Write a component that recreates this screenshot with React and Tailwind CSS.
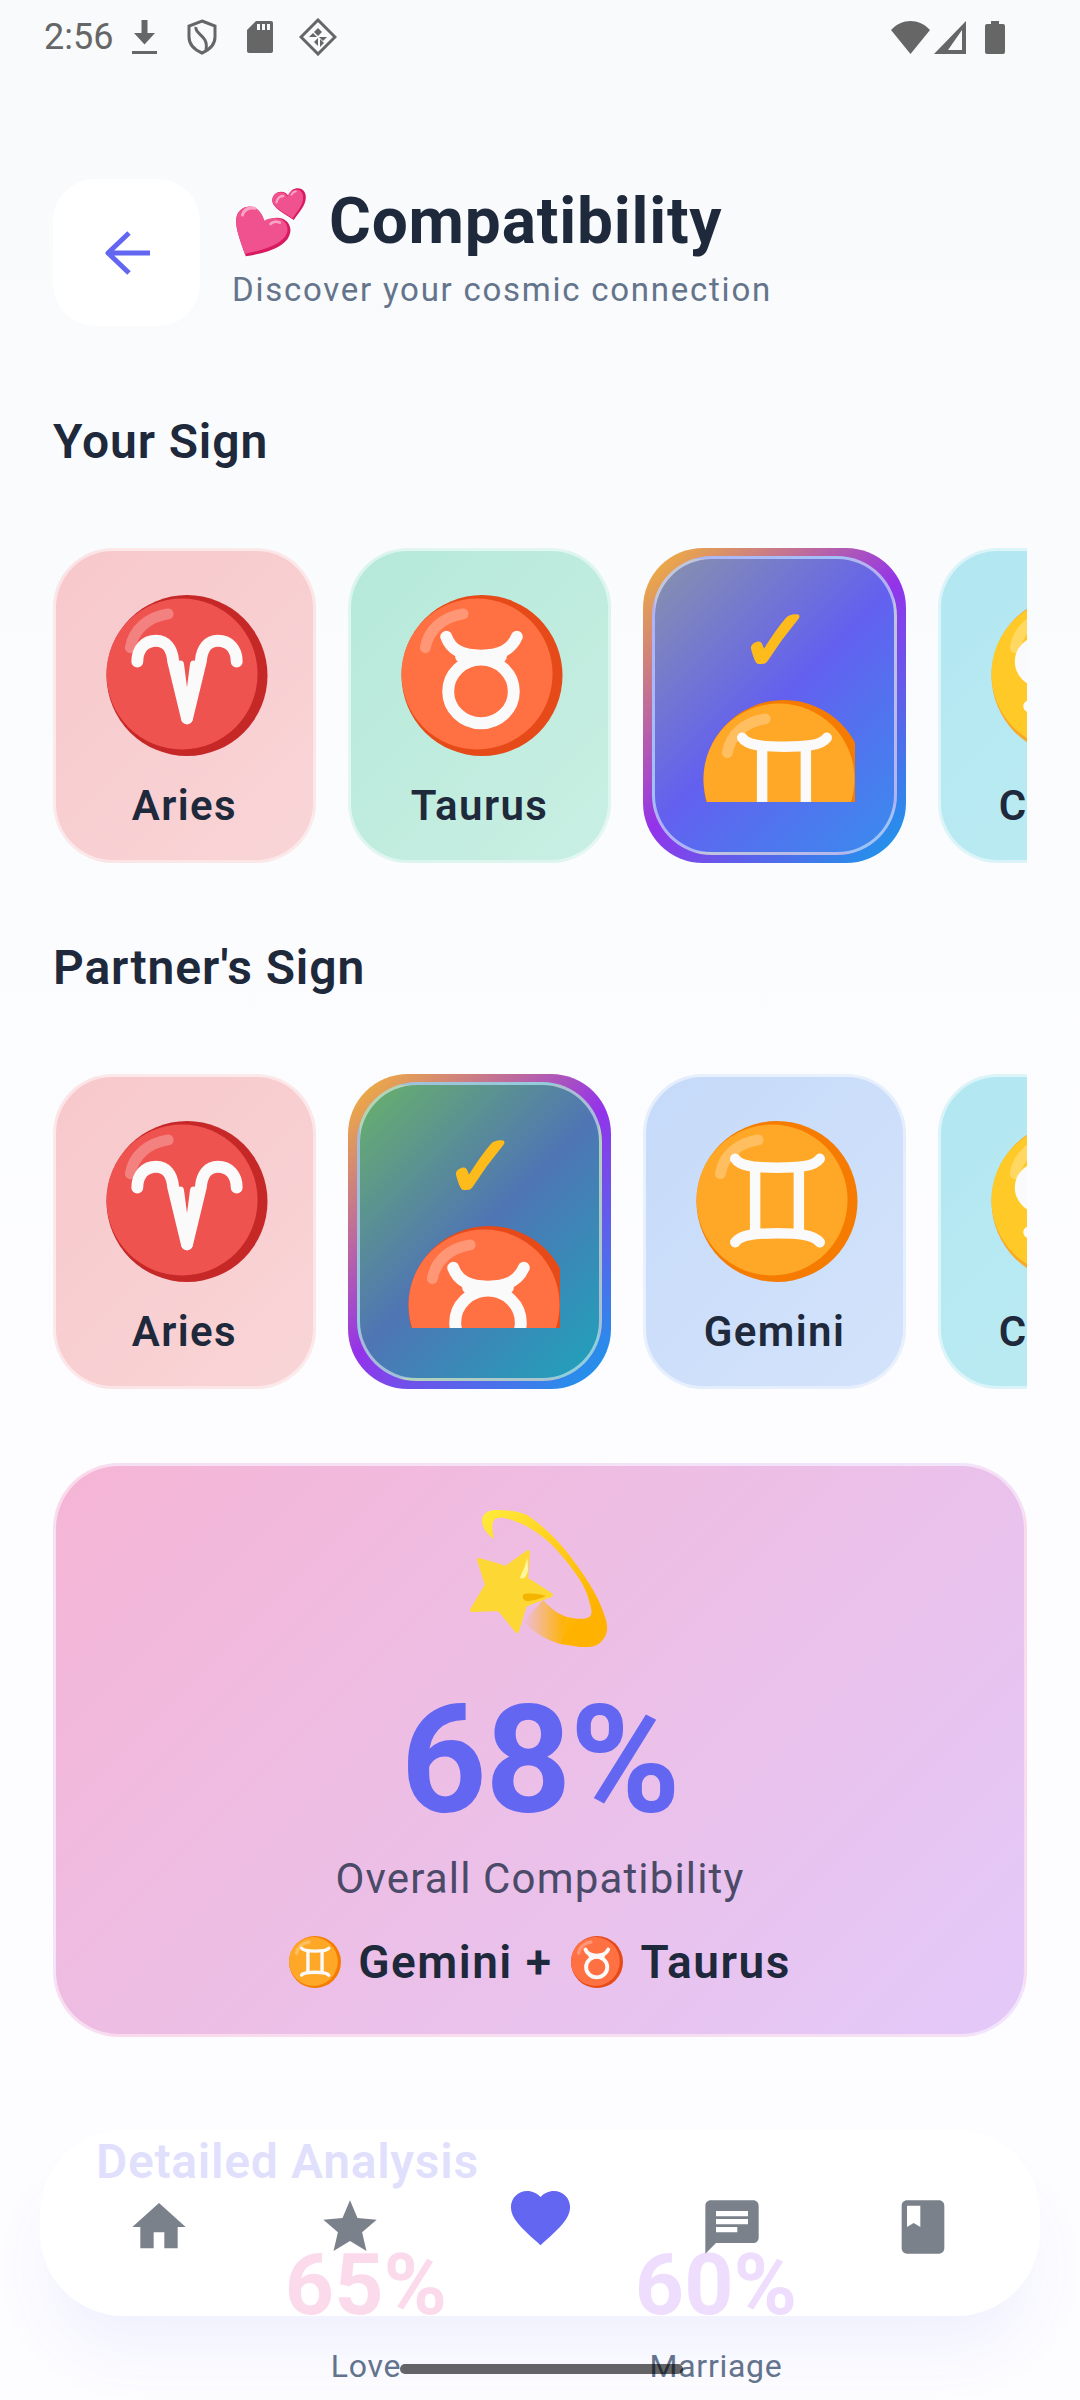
import React from "react";

const INK = "text-[#1e293b]";

function ZodiacDisc({ dark, light, children, className = "" }) {
  return (
    <svg viewBox="0 0 162 162" className={className}>
      <circle cx="81" cy="81" r="81" fill={dark} />
      <circle cx="76" cy="79.5" r="76" fill={light} />
      {children}
      <path d="M24 53C27 35 42 22 62 19" fill="none" stroke="#fff" strokeOpacity="0.27" strokeWidth="11" strokeLinecap="round" />
    </svg>
  );
}

const glyph = { fill: "none", stroke: "#fafafa", strokeWidth: 12, strokeLinecap: "round", strokeLinejoin: "round" };

function Aries({ className }) {
  return (
    <ZodiacDisc dark="#c62828" light="#ef5350" className={className}>
      <g {...glyph}>
        <path d="M31 67C31 54 39 46 50 46C60 46 66 54 67 66L81 124" />
        <path d="M131 67C131 54 123 46 112 46C102 46 96 54 95 66L81 124" />
        <path d="M74 70L81 124L88 70" strokeWidth="8" />
      </g>
    </ZodiacDisc>
  );
}
function Taurus({ className }) {
  return (
    <ZodiacDisc dark="#e64a19" light="#ff7043" className={className}>
      <g {...glyph}>
        <ellipse cx="80" cy="97" rx="33" ry="32" />
        <path d="M45 42C50 56 62 61 80 61C98 61 110 56 116 42" />
        <path d="M60 62L66 68M100 62L94 68" />
      </g>
    </ZodiacDisc>
  );
}
function Gemini({ className }) {
  return (
    <ZodiacDisc dark="#f57c00" light="#ffa726" className={className}>
      <g {...glyph} strokeWidth="10.5">
        <path d="M39 38C44 46 60 47 81 47C102 47 118 46 124 38" />
        <path d="M39 122C44 114 60 113 81 113C102 113 118 114 124 122" />
        <path d="M59 47V113M103 47V113" />
      </g>
    </ZodiacDisc>
  );
}
function Cancer({ className }) {
  return (
    <ZodiacDisc dark="#f9a825" light="#ffca28" className={className}>
      <g {...glyph}>
        <circle cx="49" cy="67" r="19" strokeWidth="13" />
        <circle cx="113" cy="95" r="19" strokeWidth="13" />
        <path d="M60 44C80 38 104 40 124 50M38 112C60 126 100 126 122 113" />
      </g>
    </ZodiacDisc>
  );
}

function SignCard({ name, Icon, from, to }) {
  return (
    <div
      className="flex h-[315px] w-[263px] shrink-0 flex-col items-center rounded-[60px] border-[3px] border-white/50 pt-[44px]"
      style={{ backgroundImage: `linear-gradient(135deg, ${from}, ${to})` }}
    >
      <div className="ml-[4px] h-[161px] w-[162px]">
        <Icon className="h-[161px] w-[162px]" />
      </div>
      <div className={`mt-[26px] whitespace-nowrap text-[42px] leading-[48px] font-semibold tracking-[1.4px] ${INK}`}>{name}</div>
    </div>
  );
}

function SelectedCard({ Icon, from, mid, to }) {
  return (
    <div className="h-[315px] w-[263px] shrink-0 rounded-[60px] bg-[linear-gradient(135deg,#f7b733_0%,#9333ea_50%,#169ceb_100%)] px-[9px] py-[8px]">
      <div
        className="flex h-full w-full flex-col items-center overflow-hidden rounded-[60px] border-[3px] border-white/50"
        style={{ backgroundImage: `linear-gradient(135deg, ${from} 0%, ${mid} 50%, ${to} 100%)` }}
      >
        <div className="ml-[3px] mt-[46px] h-[72px] text-[88px] leading-[72px] font-bold text-[#fdbb1c] [-webkit-text-stroke:3px_#fdbb1c] [font-family:'DejaVu_Sans',sans-serif]">✓</div>
        <div className="ml-[9px] mt-[23px] h-[102px] w-[152px] overflow-hidden">
          <Icon className="h-[161px] w-[162px] max-w-none" />
        </div>
      </div>
    </div>
  );
}

function SectionTitle({ children, className = "" }) {
  return <h2 className={`text-[48px] leading-[56px] font-semibold tracking-[0.9px] ${INK} ${className}`}>{children}</h2>;
}

function TwoHearts() {
  return (
    <svg viewBox="40 40 230 225" className="ml-[1px] h-[75px] w-[77px] shrink-0">
      <path d="M78 257C60 205 45 170 50 140C55 105 115 85 135 155C165 130 210 140 212 178C210 225 150 245 78 257Z" fill="#d81b60" />
      <path d="M75 250C60 205 45 170 50 140C55 105 115 85 133 150C160 135 203 140 203 178C200 215 145 235 75 250Z" fill="#f0528f" />
      <path d="M68 133C72 118 88 108 105 113" fill="none" stroke="#f8a5c6" strokeWidth="9" strokeLinecap="round" />
      <path d="M152 160C160 152 172 152 180 156" fill="none" stroke="#f8a5c6" strokeWidth="8" strokeLinecap="round" />
      <path d="M222 148C195 128 160 115 157 90C158 60 195 55 205 75C215 45 258 45 258 80C258 105 238 125 222 148Z" fill="#d81b60" />
      <path d="M218 143C195 125 160 112 157 90C158 60 195 58 203 78C215 50 250 50 250 80C250 105 232 122 218 143Z" fill="#f0528f" />
      <path d="M170 95C172 84 180 76 190 76" fill="none" stroke="#f8a5c6" strokeWidth="7" strokeLinecap="round" />
      <path d="M215 72C218 66 222 63 228 62" fill="none" stroke="#f8a5c6" strokeWidth="6" strokeLinecap="round" />
    </svg>
  );
}

function ShootingStar() {
  return (
    <svg viewBox="0 0 200 180" className="h-[180px] w-[200px]">
      <defs>
        <linearGradient id="arc" x1="45" y1="20" x2="150" y2="120" gradientUnits="userSpaceOnUse">
          <stop offset="0" stopColor="#ffeb3b" />
          <stop offset="1" stopColor="#ffb300" />
        </linearGradient>
        <linearGradient id="tail" x1="85" y1="0" x2="125" y2="0" gradientUnits="userSpaceOnUse">
          <stop offset="0" stopColor="#ffb300" stopOpacity="0.05" />
          <stop offset="1" stopColor="#ffb300" />
        </linearGradient>
      </defs>
      <path d="M54 49C47 44 42 38 42 30C43 22 50 20 57 20C70 20 80 22 87 25C105 37 120 52 133 70C150 93 160 110 165 127C168 135 169 145 160 153C153 158 147 157 140 157L120 154L127 127C133 128 140 130 147 128C152 127 152 122 151 118C148 105 145 98 140 90C130 75 120 63 110 53C95 40 85 35 77 32C70 29 63 27 58 28C52 29 51 35 54 49Z" fill="url(#arc)" />
      <path d="M83 132L103 110C110 118 118 124 127 127L120 154C107 150 95 143 83 132Z" fill="url(#tail)" />
      <path d="M88 62L66 78L39 70L47 95L32 120L59 119L77 141L85 115L111 105L86 89Z" fill="#fdd835" stroke="#fdd835" strokeWidth="4" strokeLinejoin="round" />
      <path d="M87 68C86 75 82 82 80 88C84 90 87 86 88 80C88 76 88 72 87 68Z" fill="#fff59d" />
      <path d="M84 104C92 103 100 104 106 106C100 109 92 111 86 111C82 109 82 106 84 104Z" fill="#f4b400" />
    </svg>
  );
}

function StatusBar() {
  const c = "#666666";
  return (
    <div className="flex h-[74px] items-center pl-[44px] pr-[75px] text-[#666666]">
      <span className="w-[88px] text-[36px] leading-[40px] font-normal">2:56</span>
      <svg viewBox="0 0 25 35" className="h-[35px] w-[25px]" fill={c}>
        <path d="M9.5 0H15.5V13H23L12.5 24.5L2 13H9.5ZM0 31H25V34H0Z" />
      </svg>
      <svg viewBox="0 0 30 36" className="ml-[30px] h-[36px] w-[30px]" fill="none" stroke={c} strokeWidth="3">
        <path d="M15 2L28 7V18C28 26 22 31 15 34C8 31 2 26 2 18V7Z" />
        <path d="M9 8C7 15 22 16 19 31" />
      </svg>
      <svg viewBox="0 0 26 32" className="ml-[30px] h-[32px] w-[26px]">
        <path d="M9 0H24Q26 0 26 2V30Q26 32 24 32H2Q0 32 0 30V9Z" fill={c} />
        <path d="M10 3H13V9H10ZM15 3H18V9H15ZM20 3H23V9H20Z" fill="#f8fafc" />
      </svg>
      <svg viewBox="0 0 38 38" className="ml-[26px] h-[38px] w-[38px]">
        <path d="M19 2L36 19L19 36L2 19Z" fill="none" stroke={c} strokeWidth="3" />
        <path d="M19 10L23 14L19 18L15 14ZM10 19L14 15L18 19H10ZM20 19H28L24 23ZM15 24L19 20V28ZM21 21L25 25L21 29Z" fill={c} />
      </svg>
      <div className="flex-1" />
      <svg viewBox="0 0 39 33" className="h-[33px] w-[39px]" fill={c}>
        <path d="M0 9C11 -3 28 -3 39 9L19.5 33Z" />
      </svg>
      <svg viewBox="0 0 32 33" className="ml-[4px] h-[33px] w-[32px]">
        <path d="M0 33L32 0V33ZM14 29H28V9Z" fill={c} fillRule="evenodd" />
      </svg>
      <svg viewBox="0 0 20 33" className="ml-[19px] h-[33px] w-[20px]" fill={c}>
        <path d="M6 0H14V3H18Q20 3 20 5V31Q20 33 18 33H2Q0 33 0 31V5Q0 3 2 3H6Z" />
      </svg>
    </div>
  );
}

function NavIcon({ d, size, fill, className = "" }) {
  return (
    <svg viewBox="0 0 24 24" fill={fill} style={{ width: size, height: size }} className={className}>
      <path d={d} />
    </svg>
  );
}

function BottomNav() {
  const grey = "#7b818a";
  const items = [
    { d: "M10 20v-6h4v6h5v-8h3L12 3 2 12h3v8z", size: 64, fill: grey },
    { d: "M12 17.27L18.18 21l-1.64-7.03L22 9.24l-7.19-.61L12 2 9.19 8.63 2 9.24l5.46 4.73L5.82 21z", size: 64, fill: grey },
    { d: "M12 21.35l-1.45-1.32C5.4 15.36 2 12.28 2 8.5 2 5.42 4.42 3 7.5 3c1.74 0 3.41.81 4.5 2.09C13.09 3.81 14.76 3 16.5 3 19.58 3 22 5.42 22 8.5c0 3.78-3.4 6.86-8.55 11.54L12 21.35z", size: 71, fill: "#6366f1", raised: true },
    { d: "M20 2H4c-1.1 0-1.99.9-1.99 2L2 22l4-4h14c1.1 0 2-.9 2-2V4c0-1.1-.9-2-2-2zM6 9h12v2H6V9zm8 5H6v-2h8v2zm4-6H6V6h12v2z", size: 64, fill: grey },
    { d: "M18 2H6c-1.1 0-2 .9-2 2v16c0 1.1.9 2 2 2h12c1.1 0 2-.9 2-2V4c0-1.1-.9-2-2-2zM6 4h5v8l-2.5-1.5L6 12V4z", size: 64, fill: grey },
  ];
  return (
    <div className="absolute left-[40px] top-[2130px] flex h-[186px] w-[1000px] items-start rounded-[84px] bg-white/80 pl-[24px] pr-[22px] pt-[65px] shadow-[0_44px_60px_-8px_rgba(99,102,241,0.08)]">
      {items.map((it, i) => (
        <div key={i} className="flex flex-1 justify-center">
          <NavIcon d={it.d} size={it.size} fill={it.fill} className={it.raised ? "-mt-[13px]" : ""} />
        </div>
      ))}
    </div>
  );
}

export default function App() {
  return (
    <div className="relative h-[2400px] w-[1080px] overflow-hidden bg-[linear-gradient(180deg,#f8fafc_0%,#fdfdff_60%,#fdfdff_100%)] [font-family:Roboto,sans-serif]">
      <StatusBar />

      <div className="mt-[105px] flex items-center pl-[53px]">
        <div className="flex h-[147px] w-[147px] items-center justify-center rounded-[42px] bg-white">
          <svg viewBox="0 0 46 44" className="h-[44px] w-[46px]" fill="none" stroke="#6366f1" strokeWidth="5" strokeLinejoin="round">
            <path d="M4 22H46M25 2L4 22L25 42" />
          </svg>
        </div>
        <div className="mb-[15px] ml-[32px]">
          <div className="flex h-[82px] items-center">
            <TwoHearts />
            <h1 className={`ml-[19px] text-[64px] leading-[76px] font-bold tracking-[0.8px] ${INK}`}>Compatibility</h1>
          </div>
          <p className="mt-[7px] text-[33px] leading-[40px] tracking-[1.75px] text-[#64748b]">Discover your cosmic connection</p>
        </div>
      </div>

      <SectionTitle className="ml-[53px] mt-[88px]">Your Sign</SectionTitle>
      <div className="ml-[53px] mt-[78px] flex w-[974px] gap-[32px] overflow-hidden">
        <SignCard name="Aries" Icon={Aries} from="#f7c8cb" to="#f9d5d7" />
        <SignCard name="Taurus" Icon={Taurus} from="#b5e9d9" to="#c9efe3" />
        <SelectedCard Icon={Gemini} from="#8893ab" mid="#6360ef" to="#3a8cee" />
        <SignCard name="Cancer" Icon={Cancer} from="#b2e7f1" to="#bdecf3" />
      </div>

      <SectionTitle className="ml-[53px] mt-[77px]">Partner's Sign</SectionTitle>
      <div className="ml-[53px] mt-[78px] flex w-[974px] gap-[32px] overflow-hidden">
        <SignCard name="Aries" Icon={Aries} from="#f7c8cb" to="#f9d5d7" />
        <SelectedCard Icon={Taurus} from="#68b26a" mid="#4f75b4" to="#1fa3bb" />
        <SignCard name="Gemini" Icon={Gemini} from="#c5daf9" to="#d4e3fb" />
        <SignCard name="Cancer" Icon={Cancer} from="#b2e7f1" to="#bdecf3" />
      </div>

      <div className="ml-[53px] mt-[74px] flex h-[574px] w-[974px] flex-col items-center rounded-[66px] border-[3px] border-white/50 bg-[linear-gradient(135deg,#f5b5d5_0%,#e3c9f9_100%)] pt-[24px]">
        <ShootingStar />
        <div className="mt-[3px] text-[150px] leading-[176px] font-bold tracking-[-1.5px] text-[#6366f1]">68%</div>
        <div className="mt-[7px] text-[42px] leading-[46px] tracking-[1.15px] text-[#4b4a68]">Overall Compatibility</div>
        <div className={`mt-[33px] flex items-center text-[46px] leading-[54px] font-semibold tracking-[1.5px] ${INK}`}>
          <Gemini className="mr-[17px] h-[52px] w-[52px]" />
          <span>Gemini +</span>
          <Taurus className="mx-[18px] h-[52px] w-[52px]" />
          <span>Taurus</span>
        </div>
      </div>

      <h2 className="ml-[96px] mt-[97px] text-[48px] leading-[56px] font-semibold tracking-[0.7px] text-[#6366f1]">Detailed Analysis</h2>
      <div className="mt-[58px] flex pl-[266px]">
        <div className="flex w-[200px] flex-col items-center">
          <div className="h-[68px] overflow-hidden text-[86px] leading-[74px] font-bold text-[#ec4899]">65%</div>
          <div className="mt-[30px] text-[32px] leading-[40px] tracking-[0.7px] text-[#64748b]">Love</div>
        </div>
        <div className="ml-[150px] flex w-[200px] flex-col items-center">
          <div className="h-[68px] overflow-hidden text-[86px] leading-[74px] font-bold text-[#a855f7]">60%</div>
          <div className="mt-[30px] text-[32px] leading-[40px] tracking-[0.7px] text-[#64748b]">Marriage</div>
        </div>
      </div>

      <BottomNav />
      <div className="absolute left-[400px] top-[2364px] h-[10px] w-[283px] rounded-full bg-black/60" />
    </div>
  );
}
